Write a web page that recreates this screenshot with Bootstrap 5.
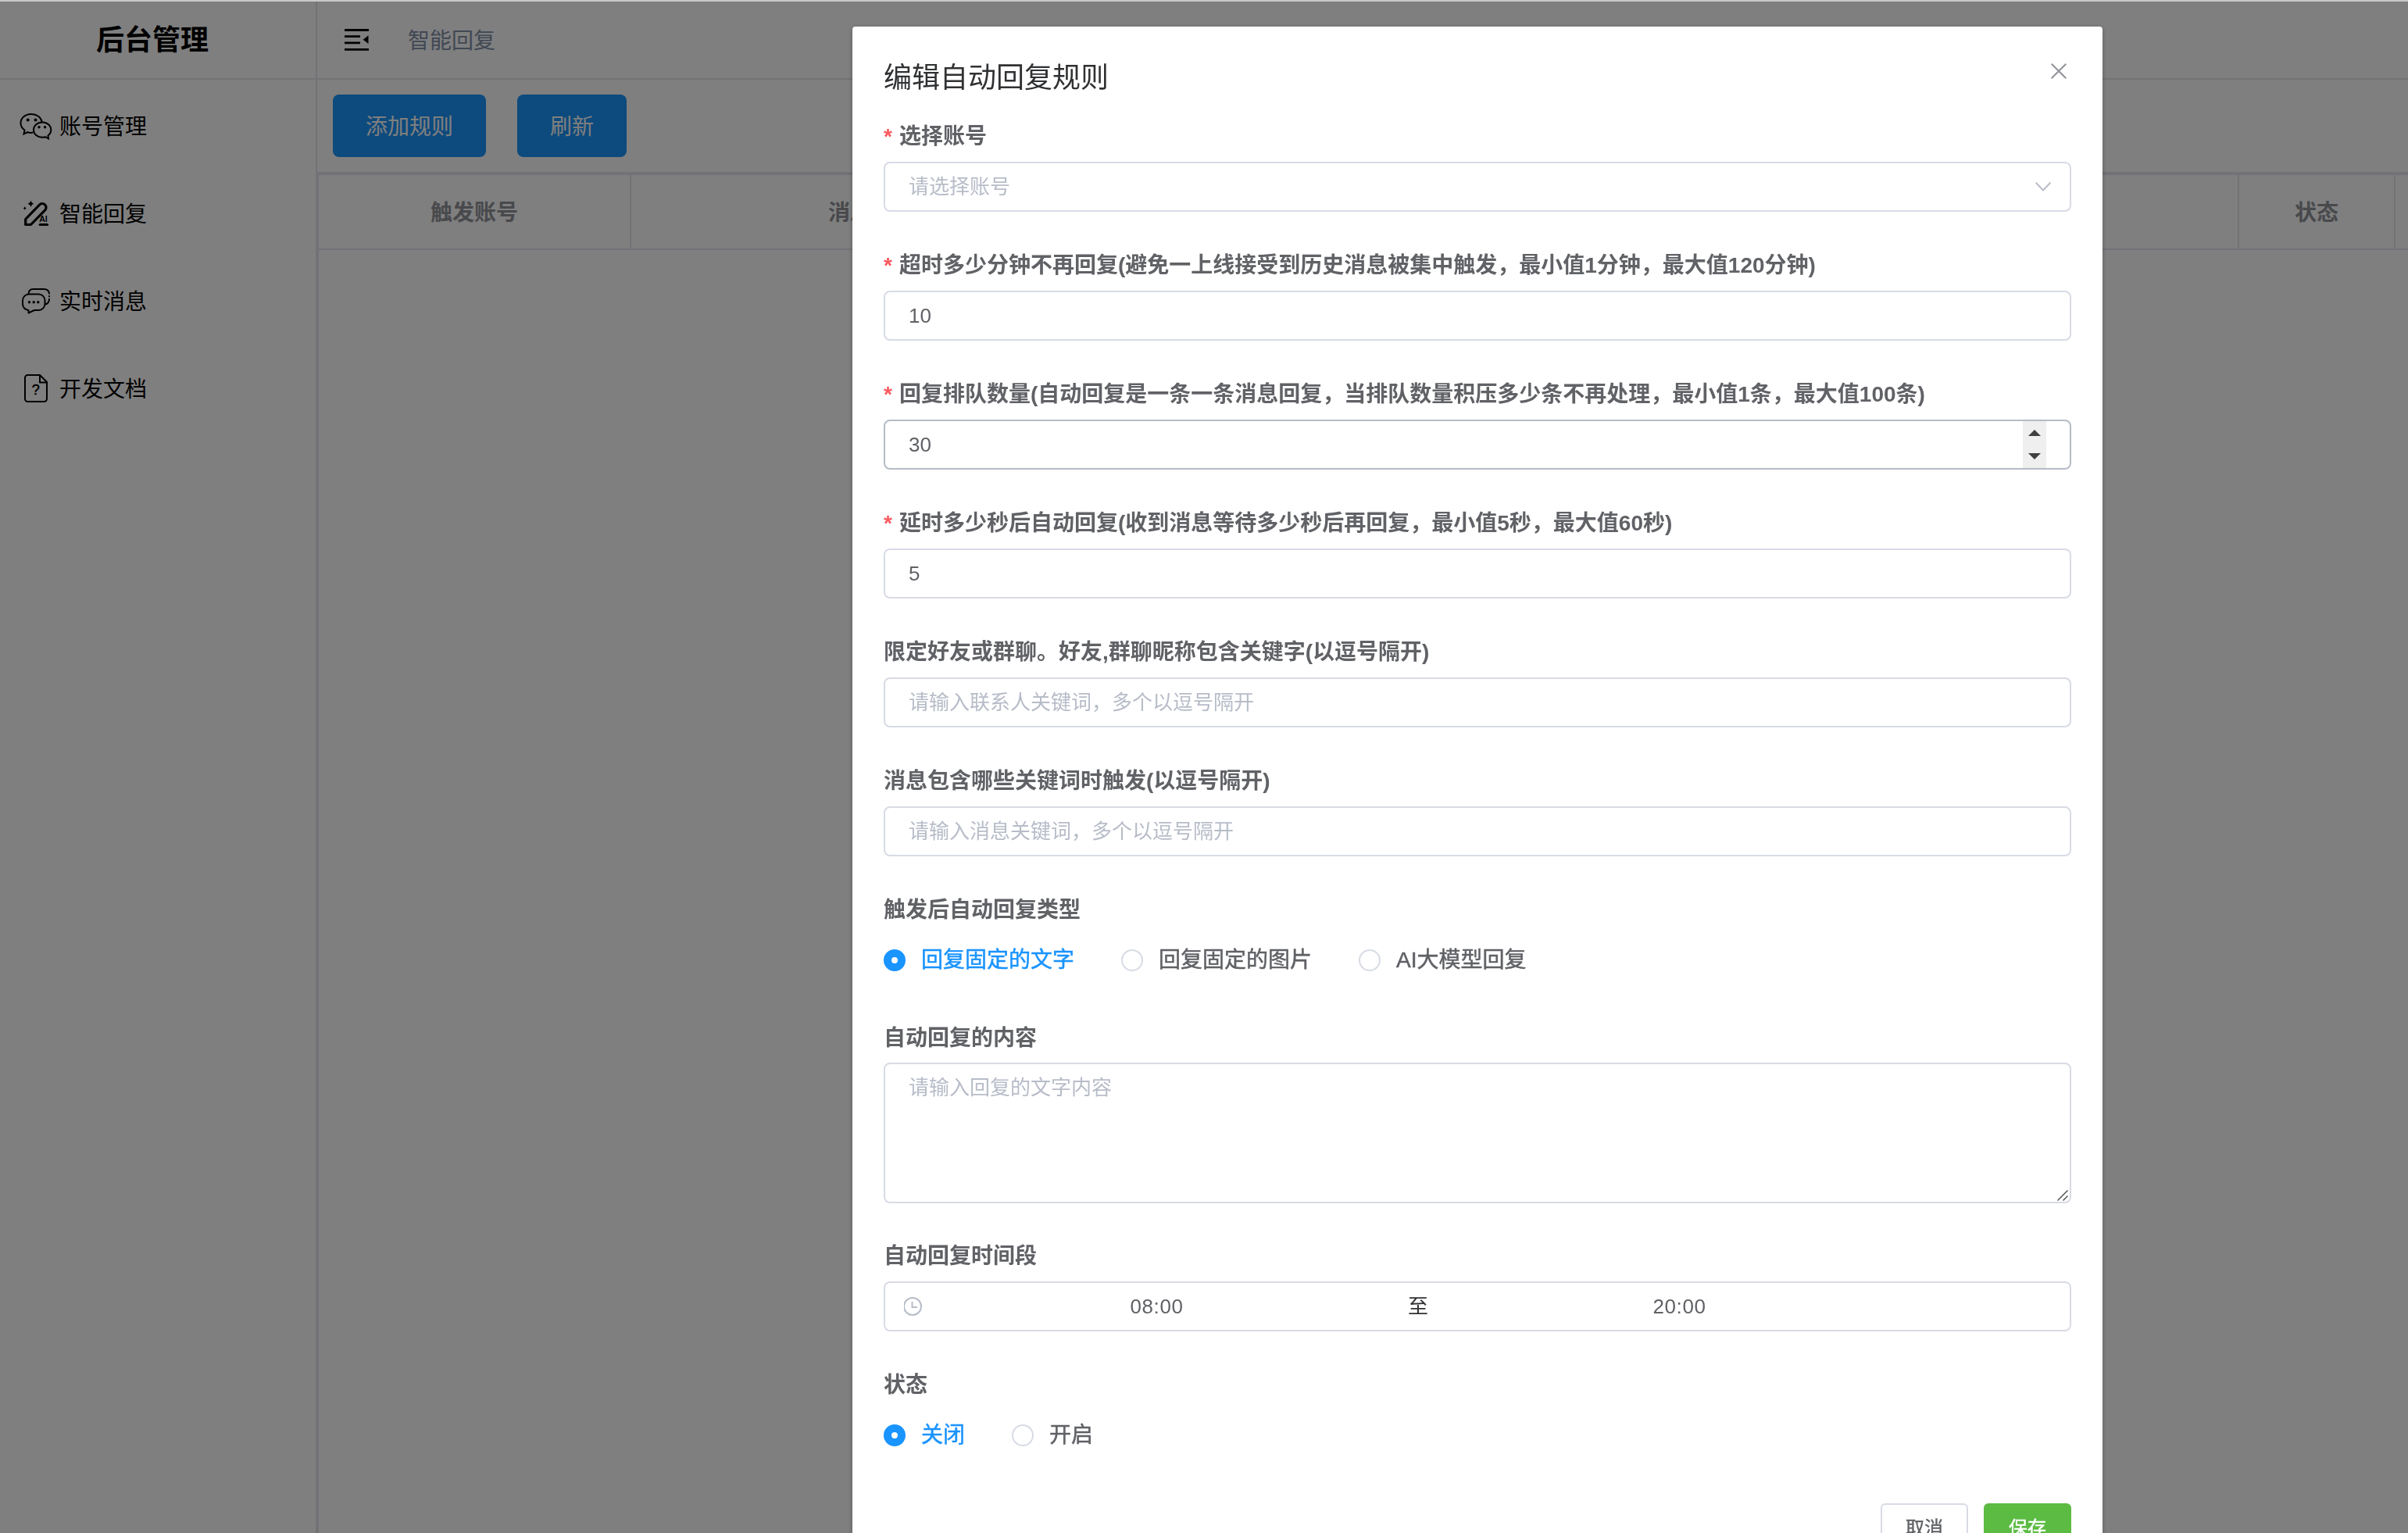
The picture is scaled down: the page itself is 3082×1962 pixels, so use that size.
<!DOCTYPE html>
<html lang="zh-CN">
<head>
  <meta charset="UTF-8">
  <title>后台管理</title>
  <link href="https://cdn.jsdelivr.net/npm/bootstrap@5.3.0/dist/css/bootstrap.min.css" rel="stylesheet">
  <style>
    body { font-family: "Liberation Sans", "Noto Sans CJK SC", sans-serif; font-size: 28px; line-height: 1.4; color: #000; overflow: hidden; border-top: 2px solid #c8c8c8; }
    .shell { height: calc(100vh - 2px); }
    .line { border: 0 solid #e4e4ee; }
    .side { width: 406px; border-right-width: 2px; }
    .brand { height: 100px; border-bottom-width: 2px; font-size: 36px; padding: 2px 14px 0 0; }
    .menu { padding-top: 3px; }
    .menu-item { height: 112px; padding-left: 24px; gap: 8px; color: #000; text-decoration: none; }
    .menu-item span, .topbar span { padding-top: 3px; }
    .topbar { height: 100px; border-bottom-width: 2px; padding-left: 34px; gap: 48px; color: #8291a9; }
    .toolbar { height: 120px; border-bottom-width: 2px; padding: 0 20px; gap: 40px; }
    .btn-blue { --bs-btn-bg: #1a94fa; --bs-btn-color: #fff; height: 80px; border: 0; border-radius: 8px; font-size: 28px; padding: 3px 42px 0; }
    .grid-box { border-width: 2px 0 0 2px; }
    .grid-head { height: 96px; border-bottom-width: 2px; color: #909399; }
    .grid-cell { border-right-width: 2px; padding-top: 3px; }
    .c1 { width: 400px; }
    .c2 { width: 646px; }
    .c3 { width: 1412px; }
    .c4 { width: 200px; }

    .modal-backdrop { --bs-backdrop-opacity: .5; width: 100%; height: calc(100% - 2px); top: 2px; }
    .rule-modal { overflow: hidden; }
    .rule-modal .modal-dialog { max-width: 1600px; margin: 34px 0 0 1091px; }
    .rule-modal .modal-content { border: 0; border-radius: 4px; box-shadow: 0 2px 6px rgba(0,0,0,.3); color: #606266; padding: 0 40px 40px; }
    .rule-modal .modal-header { border: 0; padding: 40px 6px 20px 0; height: 108px; }
    .rule-modal .modal-title { font-size: 36px; line-height: 48px; color: #303133; font-weight: 400; padding-top: 2px; }
    .close-btn { margin-top: -7px; }
    .form-item { margin-bottom: 36px; }
    .form-item > label { display: block; height: 65px; line-height: 65px; font-weight: 700; white-space: nowrap; }
    .form-item.tight > label { height: 63px; line-height: 64px; }
    .form-item.mid > label { height: 64px; line-height: 64px; }
    .req::before { content: "*"; color: #fa5a5f; margin-right: 9px; }
    .field { height: 64px; border: 2px solid #d8dbe5; border-radius: 8px; padding: 0 30px; font-size: 26px; background: #fff; color: #606266; }
    .field.over { border-color: #b5bcc6; }
    .hint { color: #b7bcc8; }
    .area { height: 180px; padding: 11px 2px 1px 30px; line-height: 38px; }
    .spin { width: 30px; height: 60px; background: #efefef; }
    .radios { height: 64px; gap: 60px; -webkit-text-stroke: .5px; }
    .radio { gap: 20px; }
    .dot { width: 28px; height: 28px; border: 2px solid #d8dbe5; border-radius: 50%; background: #fff; }
    .radio.on { color: #1a94ff; }
    .radio.on .dot { border: 10px solid #1a94ff; }
    .time-input { width: 593px; letter-spacing: .6px; }
    .time-sep { width: 76px; color: #303133; }
    .foot { padding-top: 19px; gap: 20px; }
    .foot .btn { width: 112px; height: 64px; font-size: 24px; border-radius: 6px; padding: 0; border: 2px solid #d8dbe5; color: #606266; line-height: 60px; -webkit-text-stroke: .4px; }
    .foot .btn-save { background: #5cbb43; border-color: #5cbb43; color: #fff; }
  </style>
</head>
<body>
  <div class="shell d-flex">
    <aside class="side line flex-shrink-0">
      <div class="brand line d-flex align-items-center justify-content-center fw-bold">后台管理</div>
      <nav class="menu d-flex flex-column">
        <a class="menu-item d-flex align-items-center" href="#">
          <svg width="44" height="44" fill="none" stroke="#000" stroke-width="2">
            <path d="M18.5 30.5C15.500 31.200 13.500 31 11.500 30.200L6.500 32.500L7.500 27.500C4.500 25.500 2.500 22 2.500 18.500C2.500 12 8.500 7 16 7C23 7 28.500 11 29.700 17"/>
            <path d="M37.500 34.500C40 32.500 41.300 30 41.300 27.200C41.300 21.700 36.500 17.500 30.200 17.500C24 17.500 19 21.700 19 27.200C19 32.500 24 36.800 30.200 36.800C31.800 36.800 33 36.600 34 36.200L38 38.500Z"/>
            <g fill="#000" stroke="none"><circle cx="11.700" cy="14.400" r="2"/><circle cx="21.500" cy="14.400" r="2"/><circle cx="26" cy="23.800" r="1.700"/><circle cx="33.600" cy="23.800" r="1.700"/></g>
          </svg>
          <span>账号管理</span>
        </a>
        <a class="menu-item d-flex align-items-center" href="#">
          <svg width="44" height="44" fill="none" stroke="#000" stroke-width="3.200" stroke-linejoin="round">
            <path d="M8.700 36.500V29.500L26.500 11.200A4.700 4.700 0 0 1 33.700 17.800L15.500 36.500Z"/>
            <path d="M27.200 36.500H36.500" stroke-linecap="round"/>
            <path fill="#000" stroke="none" d="M15.400 5.500Q16.200 9 19.600 9.700Q16.200 10.500 15.400 14Q14.600 10.500 11.200 9.700Q14.600 9 15.400 5.500ZM7.700 13.200Q8.200 15 10 15.500Q8.200 16 7.700 17.800Q7.200 16 5.600 15.500Q7.200 15 7.700 13.200Z"/>
            <text x="26.200" y="33" font-size="10.500" font-weight="700" fill="#000" stroke="none">AI</text>
          </svg>
          <span>智能回复</span>
        </a>
        <a class="menu-item d-flex align-items-center" href="#">
          <svg width="44" height="44" fill="none" stroke="#000" stroke-width="2" stroke-linejoin="round">
            <path d="M13 13.600H25.500A8 8 0 0 1 33.500 21.500V26A8 8 0 0 1 25.500 34H20L12.500 37.500V34A8 8 0 0 1 5 26V21.500A8 8 0 0 1 13 13.600Z"/>
            <path d="M12.500 13.500C12.500 9 15 7 18.500 7H32C36.500 7 39 9.500 39 13.500M39 15.300V17.200M39 19C39 23.500 37.500 26 33.500 26.500"/>
            <g fill="#000" stroke="none"><circle cx="13.500" cy="23.700" r="1.700"/><circle cx="19.200" cy="23.700" r="1.700"/><circle cx="24.800" cy="23.700" r="1.700"/></g>
          </svg>
          <span>实时消息</span>
        </a>
        <a class="menu-item d-flex align-items-center" href="#">
          <svg width="44" height="44" fill="none" stroke="#000" stroke-width="2" stroke-linejoin="round">
            <path d="M11.500 5H27L36 14V35.500A3.500 3.500 0 0 1 32.500 39H11.500A3.500 3.500 0 0 1 8 35.500V8.500A3.500 3.500 0 0 1 11.500 5ZM27 5V14.500H36"/>
            <text x="21.700" y="30" font-size="18" text-anchor="middle" fill="#000" stroke="#000" stroke-width=".5">?</text>
          </svg>
          <span>开发文档</span>
        </a>
      </nav>
    </aside>
    <main class="flex-grow-1 d-flex flex-column overflow-hidden">
      <header class="topbar line d-flex align-items-center flex-shrink-0">
        <svg width="34" height="32" fill="#000"><path d="M1 2H32V5H1ZM1 10.200H21V13H1ZM1 18.500H21V21.300H1ZM1 27H32V29.800H1ZM31.500 10.300V21L24.700 15.700Z"/></svg>
        <span>智能回复</span>
      </header>
      <div class="toolbar line d-flex align-items-center flex-shrink-0">
        <button class="btn btn-blue">添加规则</button>
        <button class="btn btn-blue">刷新</button>
      </div>
      <div class="grid-box line flex-grow-1 overflow-hidden">
        <div class="grid-head line d-flex text-center fw-bold">
          <div class="grid-cell line c1 flex-shrink-0 d-flex align-items-center justify-content-center">触发账号</div>
          <div class="grid-cell line c2 flex-shrink-0 d-flex align-items-center justify-content-center">消息关键词</div>
          <div class="grid-cell line c3 flex-shrink-0"></div>
          <div class="grid-cell line c4 flex-shrink-0 d-flex align-items-center justify-content-center">状态</div>
        </div>
      </div>
    </main>
  </div>

  <div class="modal-backdrop show"></div>
  <div class="modal rule-modal show d-block" tabindex="-1">
    <div class="modal-dialog">
      <div class="modal-content">
        <div class="modal-header d-flex align-items-start justify-content-between">
          <h5 class="modal-title">编辑自动回复规则</h5>
          <svg class="close-btn" width="20" height="40" stroke="#909399" stroke-width="2" viewBox="0 0 20 40"><path d="M.7 14.700L19.300 33.300M19.300 14.700L.7 33.300"/></svg>
        </div>
        <div class="form-item">
          <label class="req">选择账号</label>
          <div class="field d-flex align-items-center justify-content-between pe-4">
            <span class="hint">请选择账号</span>
            <svg width="20" height="12" fill="none" stroke="#b7bcc8" stroke-width="2"><path d="M.7 .7L10 10.500L19.300 .7"/></svg>
          </div>
        </div>
        <div class="form-item">
          <label class="req">超时多少分钟不再回复(避免一上线接受到历史消息被集中触发，最小值1分钟，最大值120分钟)</label>
          <div class="field d-flex align-items-center">10</div>
        </div>
        <div class="form-item">
          <label class="req">回复排队数量(自动回复是一条一条消息回复，当排队数量积压多少条不再处理，最小值1条，最大值100条)</label>
          <div class="field over d-flex align-items-center justify-content-between">
            30
            <svg class="spin" viewBox="0 0 30 60" fill="#404040"><path d="M7 19L15 11L23 19ZM7 41H23L15 49Z"/></svg>
          </div>
        </div>
        <div class="form-item">
          <label class="req">延时多少秒后自动回复(收到消息等待多少秒后再回复，最小值5秒，最大值60秒)</label>
          <div class="field d-flex align-items-center">5</div>
        </div>
        <div class="form-item">
          <label>限定好友或群聊。好友,群聊昵称包含关键字(以逗号隔开)</label>
          <div class="field hint d-flex align-items-center">请输入联系人关键词，多个以逗号隔开</div>
        </div>
        <div class="form-item">
          <label>消息包含哪些关键词时触发(以逗号隔开)</label>
          <div class="field hint d-flex align-items-center">请输入消息关键词，多个以逗号隔开</div>
        </div>
        <div class="form-item">
          <label>触发后自动回复类型</label>
          <div class="radios d-flex align-items-center">
            <div class="radio on d-flex align-items-center"><span class="dot"></span>回复固定的文字</div>
            <div class="radio d-flex align-items-center"><span class="dot"></span>回复固定的图片</div>
            <div class="radio d-flex align-items-center"><span class="dot"></span>AI大模型回复</div>
          </div>
        </div>
        <div class="form-item tight">
          <label>自动回复的内容</label>
          <div class="field area d-flex justify-content-between">
            <span class="hint">请输入回复的文字内容</span>
            <svg class="align-self-end" width="14" height="14" stroke="#555" stroke-width="1.500"><path d="M.5 13.500L13.500 .5M7.500 13.500L13.500 7.500"/></svg>
          </div>
        </div>
        <div class="form-item mid">
          <label>自动回复时间段</label>
          <div class="field d-flex align-items-center ps-4">
            <svg class="flex-shrink-0" width="27" height="24" fill="none" stroke="#b7bcc8" stroke-width="2"><circle cx="11" cy="12" r="11"/><path d="M10.500 6V13H17"/></svg>
            <span class="time-input text-center">08:00</span>
            <span class="time-sep text-center">至</span>
            <span class="time-input text-center">20:00</span>
          </div>
        </div>
        <div class="form-item">
          <label>状态</label>
          <div class="radios d-flex align-items-center">
            <div class="radio on d-flex align-items-center"><span class="dot"></span>关闭</div>
            <div class="radio d-flex align-items-center"><span class="dot"></span>开启</div>
          </div>
        </div>
        <div class="foot d-flex justify-content-end">
          <button class="btn btn-cancel">取消</button>
          <button class="btn btn-save">保存</button>
        </div>
      </div>
    </div>
  </div>
  <script src="https://cdn.jsdelivr.net/npm/bootstrap@5.3.0/dist/js/bootstrap.bundle.min.js"></script>
</body>
</html>
